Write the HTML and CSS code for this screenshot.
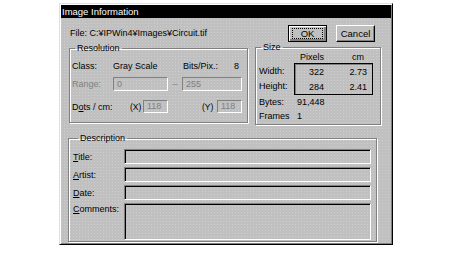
FILE: index.html
```html
<!DOCTYPE html>
<html lang="en">
<head>
  <meta charset="UTF-8" />
  <title>Image Information</title>
  <link rel="stylesheet" href="styles.css">
</head>
<body>

<div class="dialog">
  <div class="titlebar">Image Information</div>

  <div class="top">
    <div class="left">
      <div class="file">File: C:¥IPWin4¥Images¥Circuit.tif</div>
      <fieldset class="group res">
        <legend>Resolution</legend>
        <div class="row r-class">
          <span class="c-lbl">Class:</span>
          <span class="c-val">Gray Scale</span>
          <span>Bits/Pix.:</span>
          <span class="c-bits">8</span>
        </div>
        <div class="row r-range">
          <span class="c-lbl off">Range:</span>
          <span class="box off range1">0</span>
          <span class="dash">–</span>
          <span class="box off range2">255</span>
        </div>
        <div class="row r-dots">
          <span class="d-lbl">D<u>o</u>ts / cm:</span>
          <span class="axis">(X)</span>
          <span class="box off small">118</span>
          <span class="axis ay">(Y)</span>
          <span class="box off small">118</span>
        </div>
      </fieldset>
    </div>

    <div class="right">
      <div class="buttons">
        <button class="btn default"><span class="focus">OK</span></button>
        <button class="btn">Cancel</button>
      </div>
      <fieldset class="group size">
        <legend>Size</legend>
        <div class="s-head">
          <span class="col1">Pixels</span>
          <span class="col2">cm</span>
        </div>
        <div class="s-dim">
          <div class="s-labels">
            <span>Width:</span>
            <span>Height:</span>
          </div>
          <div class="s-table">
            <div class="s-row"><span class="col1">322</span><span class="col2">2.73</span></div>
            <div class="s-row"><span class="col1">284</span><span class="col2">2.41</span></div>
          </div>
        </div>
        <div class="s-info"><span class="s-lbl">Bytes:</span><span>91,448</span></div>
        <div class="s-info"><span class="s-lbl">Frames</span><span>1</span></div>
      </fieldset>
    </div>
  </div>

  <fieldset class="group desc">
    <legend>Description</legend>
    <div class="d-row"><span class="f-lbl"><u>T</u>itle:</span><span class="box field"></span></div>
    <div class="d-row"><span class="f-lbl"><u>A</u>rtist:</span><span class="box field"></span></div>
    <div class="d-row"><span class="f-lbl"><u>D</u>ate:</span><span class="box field"></span></div>
    <div class="d-row tall"><span class="f-lbl"><u>C</u>omments:</span><span class="box field"></span></div>
  </fieldset>
</div>

</body>
</html>
```

FILE: styles.css
```css
* { box-sizing: border-box; }
body {
  margin: 0;
  background: #fff;
  font-family: "Liberation Sans", Arial, sans-serif;
  font-size: 9px;
  color: #000;
}
u { text-decoration: underline; text-underline-offset: 1px; }

.dialog {
  margin: 3px 0 0 59px;
  width: 334px;
  height: 242px;
  background-color: #c0c0c0;
  background-image: radial-gradient(circle, rgba(255,255,255,0.22) 0.6px, transparent 0.8px);
  background-size: 3px 3px;
  border: 1px solid;
  border-color: #dfdfdf #000 #000 #dfdfdf;
  box-shadow: inset 1px 1px 0 #fff, inset -1px -1px 0 #808080;
}
.titlebar {
  margin: 1px 1px 0;
  height: 13px;
  line-height: 13px;
  padding-left: 1px;
  background: #000;
  color: #fff;
  font-size: 9.5px;
}

.top {
  display: flex;
  gap: 7px;
  padding: 7px 10px 0 9px;
}
.left { width: 179px; }
.right { width: 126px; }
.file {
  height: 18px;
  line-height: 16px;
  padding-left: 1px;
}

/* group boxes */
.group {
  margin: 0;
  padding: 0;
  border: 1px solid #808080;
  box-shadow: inset 1px 1px 0 #fff, 1px 1px 0 #fff;
  min-width: 0;
}
.group legend {
  margin-left: 5px;
  padding: 0 2px;
  line-height: 10px;
}

/* sunken boxes */
.box {
  display: block;
  border: 1px solid;
  border-color: #808080 #fff #fff #808080;
  box-shadow: inset 1px 1px 0 #000;
}
.box.off {
  color: #808080;
  box-shadow: inset 1px 1px 0 #c0c0c0;
  padding-left: 3px;
  line-height: 12px;
}
.off { color: #808080; }

/* resolution */
.res { height: 80px; }
.res .row {
  display: flex;
  align-items: center;
  padding-left: 2px;
}
.r-class { height: 14px; margin-top: 6px; }
.r-range { height: 14px; margin-top: 4px; }
.r-dots { height: 13px; margin-top: 9px; }
.c-lbl { width: 41px; }
.c-val { width: 70px; }
.c-bits { flex: 1; text-align: right; padding-right: 8px; }
.range1 { width: 55px; height: 14px; }
.dash { width: 14px; text-align: center; color: #808080; }
.range2 { width: 60px; height: 14px; }
.d-lbl { width: 58px; }
.axis { width: 13px; font-size: 8.5px; }
.ay { margin-left: 34px; width: 15px; }
.box.small { width: 25px; height: 13px; line-height: 11px; }

/* buttons */
.buttons {
  display: flex;
  justify-content: flex-end;
  gap: 9px;
  height: 17px;
  padding-right: 6px;
}
.btn {
  width: 39px;
  height: 17px;
  padding: 0;
  font: inherit;
  font-size: 9.5px;
  background: #c0c0c0;
  border: 1px solid;
  border-color: #fff #000 #000 #fff;
  box-shadow: inset -1px -1px 0 #808080;
}
.btn.default {
  border: 1px solid #000;
  box-shadow: inset 1px 1px 0 #fff, inset -2px -2px 0 #808080;
}
.btn .focus {
  display: block;
  margin: 2px 3px;
  height: 11px;
  line-height: 10px;
  border: 1px dotted #000;
}

/* size */
.size { height: 83px; }
.s-head {
  display: flex;
  height: 11px;
  line-height: 11px;
  padding-left: 39px;
}
.col1 { width: 34px; text-align: right; padding-right: 5px; }
.col2 { flex: 1; text-align: right; }
.s-head .col2 { padding-right: 16px; }
.s-dim { display: flex; }
.s-labels {
  width: 38px;
  display: flex;
  flex-direction: column;
  justify-content: space-around;
  padding: 0 0 2px 3px;
}
.s-table {
  width: 79px;
  height: 32px;
  border: 1px solid #000;
  box-shadow: inset 1px 1px 0 #808080;
  display: flex;
  flex-direction: column;
  justify-content: space-around;
}
.s-row { display: flex; }
.s-row .col2 { padding-right: 5px; }
.s-info {
  display: flex;
  height: 14px;
  line-height: 14px;
  padding-left: 3px;
}
.s-info:first-of-type { margin-top: 0; }
.s-lbl { width: 38px; }

/* description */
.desc {
  margin: 8px 15px 0 8px;
  padding: 6px 5px 0 4px;
  height: 109px;
}
.d-row {
  display: flex;
  align-items: center;
  height: 15px;
  margin-bottom: 3px;
}
.d-row.tall { height: 37px; align-items: flex-start; }
.d-row.tall .f-lbl { line-height: 13px; }
.f-lbl { width: 51px; }
.box.field { flex: 1; height: 100%; }
```
